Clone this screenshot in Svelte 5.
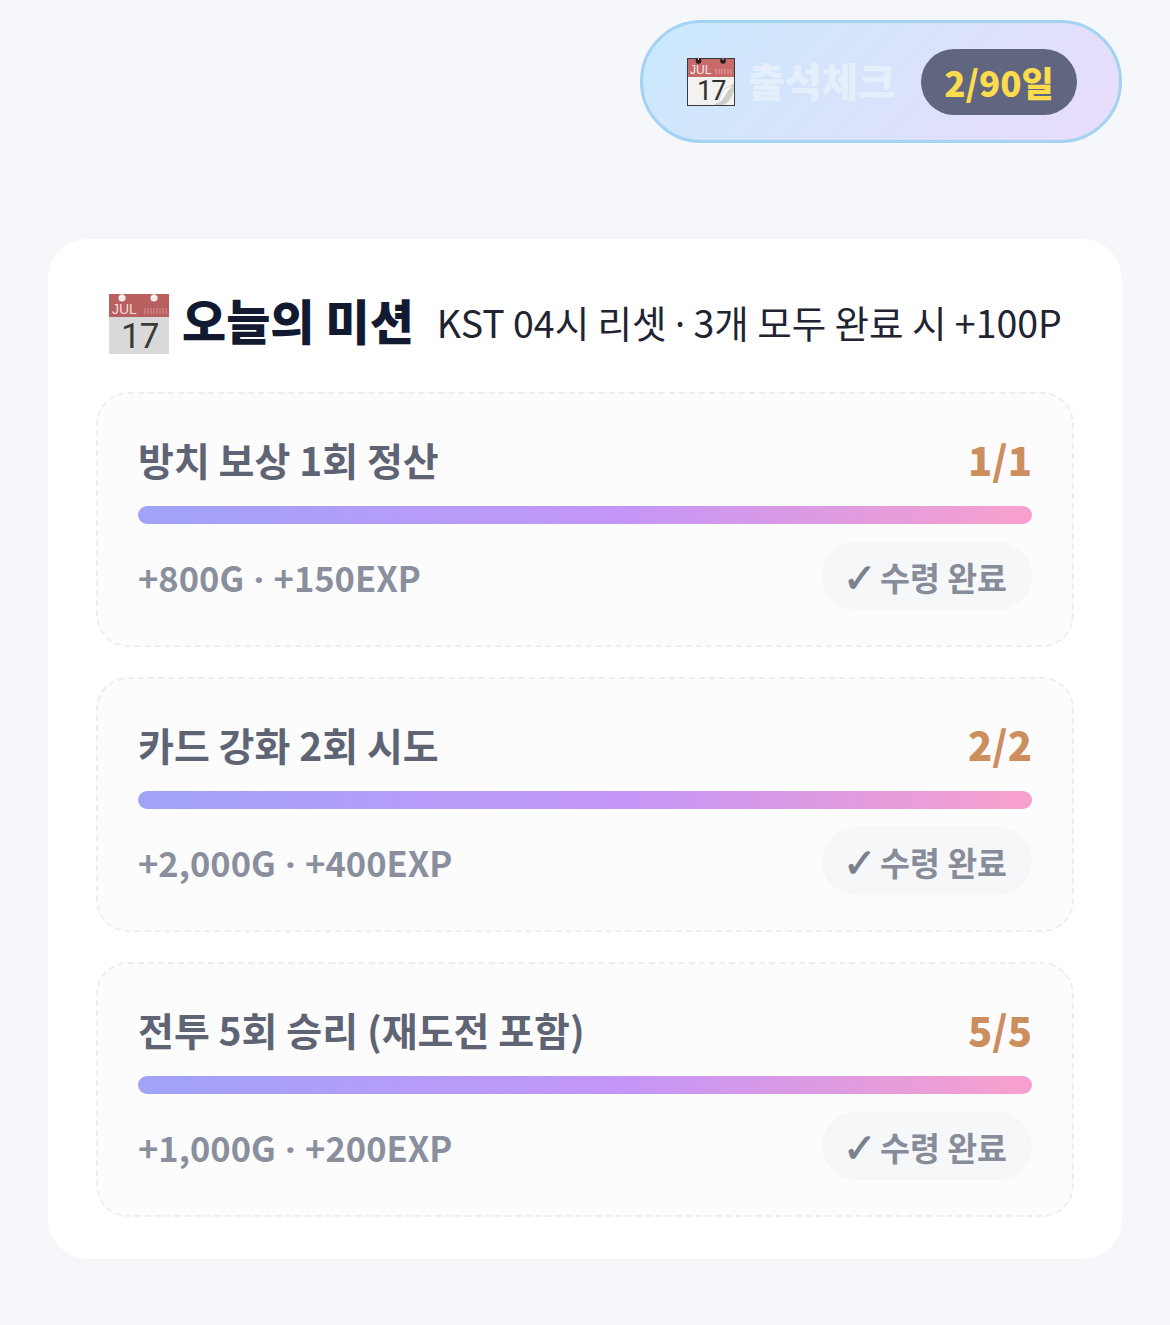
<script>
  const missions = [
    { title: '방치 보상 1회 정산', count: '1/1', reward: ['+800G', '+150EXP'] },
    { title: '카드 강화 2회 시도', count: '2/2', reward: ['+2,000G', '+400EXP'] },
    { title: '전투 5회 승리 (재도전 포함)', count: '5/5', reward: ['+1,000G', '+200EXP'] }
  ];
</script>

<div class="page">
  <div class="top">
    <button class="attend">
      <svg class="cal-sm" viewBox="0 0 48 52" width="48" height="52" aria-hidden="true">
        <rect x="0.5" y="4.500" width="47" height="47" fill="#f3f2f0" stroke="#3a3a3a" stroke-width="1"/>
        <rect x="1" y="5" width="46" height="18" fill="#c76a6a"/>
        <circle cx="11.500" cy="7" r="2.800" fill="#2a1c1c"/>
        <circle cx="36" cy="7" r="2.800" fill="#2a1c1c"/>
        <path d="M11.500 1v5M36 1v5" stroke="#cfcfcf" stroke-width="1"/>
        <text x="3" y="20" class="jul">JUL</text>
        <path d="M29 20v-5M32 20v-5M35 20v-5M38 20v-5M41 20v-5M44 20v-5" stroke="#e6a3a3" stroke-width="1"/>
        <text x="10" y="46" class="day">17</text>
        <path d="M28 51C36 47 41 36 47 30V36C45 43 41 50 36 51Z" fill="#cfcdc8"/>
        <path d="M28 51C37 48 38 40 47 30C41 34 35 35 34 40C33 45 32 48 28 51Z" fill="#fff" stroke="#b5b5b5" stroke-width=".6"/>
      </svg>
      <span class="attend-label">출석체크</span>
      <span class="attend-badge">2/90일</span>
    </button>
  </div>

  <section class="card">
    <header class="head">
      <svg class="cal" viewBox="0 0 60 60" width="60" height="60" aria-hidden="true">
        <rect x="0" y="0" width="60" height="60" fill="#d9d9d9"/>
        <rect x="0" y="0" width="60" height="23" fill="#b85f5f"/>
        <circle cx="13" cy="4" r="3.600" fill="#f6ece8"/>
        <circle cx="45" cy="4" r="3.600" fill="#f6ece8"/>
        <path d="M13 0v3M45 0v3" stroke="#fff" stroke-width="1.500"/>
        <text x="3" y="20" class="jul-lg">JUL</text>
        <path d="M36 20v-6M39 20v-6M42 20v-6M45 20v-6M48 20v-6M51 20v-6M54 20v-6M57 20v-6" stroke="#d99292" stroke-width="1"/>
        <text x="12" y="54" class="day-lg">17</text>
      </svg>
      <h2>오늘의 미션</h2>
      <p>KST 04시 리셋 <span class="dot">·</span> 3개 모두 완료 시 +100P</p>
    </header>

    <div class="list">
      {#each missions as m}
        <article class="item">
          <div class="row">
            <span class="title">{m.title}</span>
            <span class="count">{m.count}</span>
          </div>
          <div class="track"><div class="fill"></div></div>
          <div class="row foot">
            <span class="reward">{m.reward[0]} <span class="dot">·</span> {m.reward[1]}</span>
            <span class="done"><span class="tick">✓</span>수령 완료</span>
          </div>
        </article>
      {/each}
    </div>
  </section>
</div>

<style>
  :global(body) {
    margin: 0;
    background: #f6f7fb;
    font-family: "Noto Sans CJK KR", "Noto Sans", sans-serif;
  }
  .page {
    box-sizing: border-box;
    height: 1325px;
    padding: 20px 48px 0;
  }
  .top {
    display: flex;
    justify-content: flex-end;
    margin-bottom: 96px;
  }
  .attend {
    box-sizing: border-box;
    width: 482px;
    height: 123px;
    display: flex;
    align-items: center;
    padding: 0 42px 0 44px;
    border: 3px solid #a2d4f2;
    border-radius: 62px;
    background: linear-gradient(135deg, #c9e9fc, #e9dcfb);
    font-family: inherit;
  }
  .cal-sm { flex: none; margin-top: -3px; overflow: visible; }
  .attend-label {
    margin: -4px 0 0 13px;
    font-size: 40px;
    font-weight: 800;
    color: #e5effb;
    white-space: nowrap;
  }
  .attend-badge {
    margin-left: auto;
    width: 156px;
    height: 66px;
    border-radius: 33px;
    background: #60667f;
    color: #fcdc4d;
    font-size: 35px;
    font-weight: 800;
    display: flex;
    align-items: center;
    justify-content: center;
  }
  .jul { font: 12px "Liberation Sans", sans-serif; fill: #fbe9e9; }
  .day { font: 400 27px Roboto, sans-serif; fill: #2f2f2f; letter-spacing: -1px; }
  .jul-lg { font: 14px "Liberation Sans", sans-serif; fill: #f3dcdc; }
  .day-lg { font: 400 35px Roboto, sans-serif; fill: #3a3a3a; letter-spacing: -1px; }
  .dot { font-family: "Noto Sans", sans-serif; }

  .card {
    box-sizing: border-box;
    height: 1020px;
    background: #fff;
    border-radius: 40px;
    padding: 55px 48px 0;
  }
  .head {
    display: flex;
    align-items: center;
    height: 60px;
    padding-left: 13px;
    margin-bottom: 38px;
    white-space: nowrap;
  }
  .cal { flex: none; overflow: visible; }
  h2 {
    margin: -11px 0 0 13px;
    font-size: 48px;
    font-weight: 800;
    color: #111a30;
  }
  .head p {
    margin: -5px 0 0 23px;
    font-size: 37.500px;
    font-weight: 400;
    color: #1f2433;
  }
  .list {
    display: flex;
    flex-direction: column;
    gap: 30px;
  }
  .item {
    box-sizing: border-box;
    height: 255px;
    padding: 40px 40px 0;
    border: 2px dashed #eceef1;
    border-radius: 32px;
    background: #fcfcfd;
  }
  .row {
    display: flex;
    justify-content: space-between;
    align-items: center;
  }
  .row:first-child { height: 50px; }
  .title {
    font-size: 39px;
    font-weight: 700;
    color: #5e6474;
  }
  .count {
    font-size: 40px;
    font-weight: 800;
    color: #cd8e5e;
  }
  .track {
    height: 18px;
    margin-top: 22px;
    border-radius: 9px;
    background: linear-gradient(90deg, #a0a3f8, #c596f7 55%, #f8a0cc);
  }
  .foot {
    margin-top: 18px;
  }
  .reward {
    margin-top: 2px;
    font-size: 34.500px;
    font-weight: 700;
    color: #8a8f9d;
    word-spacing: 2px;
  }
  .done {
    box-sizing: border-box;
    width: 210px;
    height: 68px;
    padding-left: 21px;
    border-radius: 34px;
    background: #f6f7f9;
    color: #868c99;
    font-size: 32.500px;
    font-weight: 700;
    display: flex;
    align-items: center;
    white-space: pre;
  }
  .tick {
    width: 37px;
    flex: none;
    margin-top: 4px;
    font: 700 40px/1 "DejaVu Sans", sans-serif;
    color: #7a808c;
    -webkit-text-stroke: 1px #7a808c;
  }
</style>
